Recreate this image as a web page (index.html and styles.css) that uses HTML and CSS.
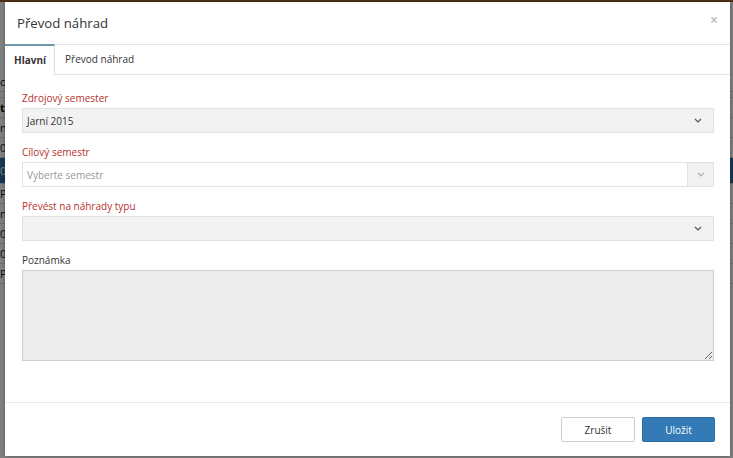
FILE: index.html
```html
<!DOCTYPE html>
<html lang="cs">
<head>
<meta charset="utf-8">
<title>Převod náhrad</title>
<link rel="stylesheet" href="styles.css">
</head>
<body>
<div class="page">
  <div class="topbar"></div>
  <div class="page-body">
    <div class="prow">ost</div>
    <div class="prow line"></div>
    <div class="prow bold">tr</div>
    <div class="prow">n</div>
    <div class="prow">0</div>
    <div class="prow blue">0</div>
    <div class="prow">Po</div>
    <div class="prow">n</div>
    <div class="prow">0</div>
    <div class="prow">0</div>
    <div class="prow">Po</div>
  </div>
</div>
<div class="backdrop"></div>

<div class="modal" role="dialog" aria-labelledby="mtitle">
  <div class="modal-header">
    <h4 class="modal-title" id="mtitle">Převod náhrad</h4>
    <span class="close" aria-label="Zavřít">×</span>
  </div>
  <div class="tabs">
    <div class="tab active">Hlavní</div>
    <div class="tab">Převod náhrad</div>
  </div>
  <div class="modal-body">
    <div class="group">
      <div class="label req">Zdrojový semester</div>
      <div class="select">
        <span>Jarní 2015</span>
        <svg class="chev" width="8" height="5" viewBox="0 0 8 5"><polyline points="1,1 4,4 7,1" fill="none" stroke="#555" stroke-width="1.2"/></svg>
      </div>
    </div>
    <div class="group">
      <div class="label req">Cílový semestr</div>
      <div class="input-group">
        <div class="input placeholder">Vyberte semestr</div>
        <div class="addon">
          <svg class="chev" width="8" height="5" viewBox="0 0 8 5"><polyline points="1,1 4,4 7,1" fill="none" stroke="#aaa" stroke-width="1.1"/></svg>
        </div>
      </div>
    </div>
    <div class="group">
      <div class="label req">Převést na náhrady typu</div>
      <div class="select">
        <span></span>
        <svg class="chev" width="8" height="5" viewBox="0 0 8 5"><polyline points="1,1 4,4 7,1" fill="none" stroke="#555" stroke-width="1.2"/></svg>
      </div>
    </div>
    <div class="group last">
      <div class="label">Poznámka</div>
      <textarea class="textarea"></textarea>
    </div>
  </div>
  <div class="modal-footer">
    <button class="btn btn-default">Zrušit</button>
    <button class="btn btn-primary">Uložit</button>
  </div>
</div>
</body>
</html>
```
FILE: styles.css
```css
* { box-sizing: border-box; }
html, body { margin: 0; padding: 0; }
body {
  width: 733px;
  height: 458px;
  overflow: hidden;
  position: relative;
  font-family: "Open Sans", "Liberation Sans", sans-serif;
  font-size: 10px;
  color: #333;
  background: #ffffff;
}

/* underlying page (mostly hidden by the modal) */
.page { height: 458px; }
.topbar { height: 2px; background: #a0602a; }
.page-body { padding-top: 70px; }
.prow {
  height: 20px;
  line-height: 20px;
  font-size: 11px;
  color: #111;
  border-bottom: 1px solid #d8d8d8;
  padding-left: 0;
}
.prow.line { height: 6px; }
.prow.bold { font-weight: 700; }
.prow.blue { background: #2b6ea6; color: #fff; height: 26px; line-height: 26px; }

.backdrop {
  position: absolute;
  inset: 0;
  background: rgba(0, 0, 0, 0.5);
}

/* modal */
.modal {
  position: absolute;
  left: 5px;
  top: 2px;
  width: 725px;
  height: 454px;
  background: #fff;
  display: flex;
  flex-direction: column;
  box-shadow: 0 0 3px rgba(0,0,0,0.35);
}
.modal-header {
  height: 42px;
  padding: 0 12px;
  display: flex;
  align-items: center;
  justify-content: space-between;
}
.modal-title {
  margin: 0;
  font-size: 13.2px;
  font-weight: 400;
  color: #333;
  line-height: 18px;
}
.close {
  font-size: 14px;
  font-weight: 700;
  color: #c4c4c4;
  line-height: 1;
  margin-right: 0;
  margin-top: -6px;
}

.tabs {
  display: flex;
  border-top: 1px solid #e6e6e6;
  border-bottom: 1px solid #e3e3e3;
  height: 31px;
}
.tab {
  line-height: 29px;
  padding: 0 10px;
  color: #333;
}
.tab.active {
  font-weight: 700;
  margin-top: -1px;
  height: 31px;
  border-top: 2px solid #6e98a8;
  border-right: 1px solid #dcdcdc;
  background: #fff;
  padding: 0 8px 0 9px;
  position: relative;
  z-index: 1;
}

.modal-body {
  padding: 16px 16px 28px 17px;
  flex: 1;
}
.group { margin-bottom: 12px; }
.label {
  line-height: 14px;
  margin-bottom: 3px;
  color: #333;
}
.label.req { color: #b8302b; }

.select {
  height: 25px;
  background: #f2f2f2;
  border: 1px solid #e2e2e2;
  display: flex;
  align-items: center;
  justify-content: space-between;
  padding: 0 11px 0 4px;
  color: #333;
}
.chev { display: block; }

.input-group { display: flex; height: 25px; }
.input {
  flex: 1;
  border: 1px solid #e2e2e2;
  border-right: none;
  background: #fff;
  display: flex;
  align-items: center;
  padding-left: 4px;
}
.placeholder { color: #999; }
.addon {
  width: 27px;
  background: #f2f2f2;
  border: 1px solid #e2e2e2;
  display: flex;
  align-items: center;
  justify-content: center;
}

.textarea {
  display: block;
  width: 100%;
  height: 91px;
  margin: 0;
  background: #ededed;
  border: 1px solid #cfcfcf;
  border-radius: 0;
  font: inherit;
  outline: none;
}

.modal-footer {
  border-top: 1px solid #e9e9e9;
  padding: 14px 15px 14px 15px;
  display: flex;
  justify-content: flex-end;
  gap: 7px;
}
.btn {
  height: 25px;
  font-family: inherit;
  font-size: 10px;
  border-radius: 2px;
  padding: 0 10px;
  cursor: pointer;
}
.btn-default {
  width: 74px;
  background: #fff;
  border: 1px solid #cccccc;
  color: #333;
}
.btn-primary {
  width: 73px;
  background: #337ab7;
  border: 1px solid #2e6da4;
  color: #fff;
}
```
